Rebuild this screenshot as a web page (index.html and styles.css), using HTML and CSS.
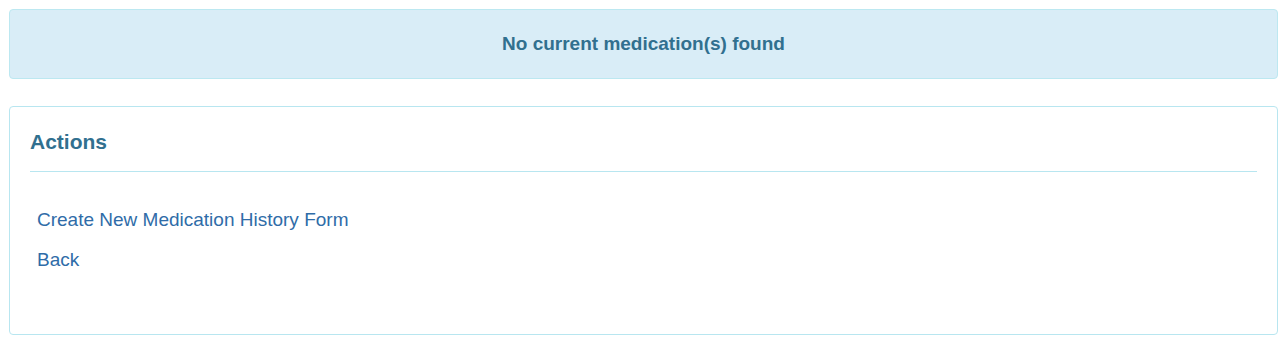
FILE: index.html
```html
<!DOCTYPE html>
<html lang="en">
<head>
<meta charset="utf-8">
<title>Medications</title>
<link rel="stylesheet" href="styles.css">
</head>
<body>
<main class="page">
  <div class="alert">No current medication(s) found</div>
  <section class="panel">
    <h2 class="panel-title">Actions</h2>
    <div class="divider"></div>
    <ul class="actions">
      <li><a href="#">Create New Medication History Form</a></li>
      <li><a href="#">Back</a></li>
    </ul>
  </section>
</main>
</body>
</html>
```

FILE: styles.css
```css
html, body {
  margin: 0;
  padding: 0;
  background: #ffffff;
}
body {
  font-family: "Liberation Sans", Arial, sans-serif;
}
.page {
  margin: 9px 7px 0 9px;
  display: flex;
  flex-direction: column;
  gap: 27px;
}
.alert {
  background: #d9edf7;
  border: 1px solid #bce8f1;
  border-radius: 4px;
  color: #31708f;
  font-size: 19px;
  font-weight: bold;
  line-height: 28px;
  padding: 20px 20px 20px 20px;
  text-align: center;
}
.panel {
  border: 1px solid #b8e6f0;
  border-radius: 4px;
  padding: 19px 20px 55px 20px;
  height: 153px;
}
.panel-title {
  margin: 0;
  font-size: 21px;
  line-height: 31px;
  font-weight: bold;
  color: #31708f;
}
.divider {
  margin: 14px 0 0 0;
  height: 1px;
  background: #b8e6f0;
}
.actions {
  list-style: none;
  margin: 28px 0 0 0;
  padding: 0 0 0 7px;
}
.actions li {
  font-size: 19px;
  line-height: 40px;
}
.actions a {
  color: #2f6ca8;
  text-decoration: none;
}
```
